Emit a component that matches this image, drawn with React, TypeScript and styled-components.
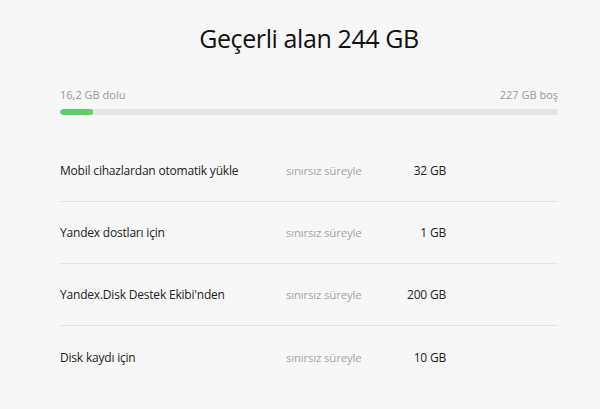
import { createGlobalStyle, styled } from "styled-components";

const GlobalStyle = createGlobalStyle`
  html, body {
    margin: 0;
    padding: 0;
    background: #f7f7f7;
    font-family: "Open Sans", "Liberation Sans", Arial, sans-serif;
    color: #222;
  }
`;

const Page = styled.div`
  padding: 18px 42px 0 60px;
`;

const Title = styled.h1`
  margin: 0;
  text-align: center;
  font-size: 25px;
  font-weight: 400;
  letter-spacing: -0.4px;
  line-height: 40px;
  color: #111;
`;

const Usage = styled.div`
  margin-top: 30px;
`;

const UsageLabels = styled.div`
  display: flex;
  justify-content: space-between;
  font-size: 11px;
  line-height: 14px;
  color: #9a9a9a;
`;

const Bar = styled.div`
  margin-top: 7px;
  height: 6px;
  border-radius: 3px;
  background: #e6e6e6;
  overflow: hidden;
`;

const Fill = styled.div`
  height: 100%;
  border-radius: 3px;
  background: #5fcf6a;
`;

const List = styled.div`
  margin-top: 25px;
`;

const Row = styled.div`
  display: grid;
  grid-template-columns: 226px 100px 60px;
  align-items: center;
  height: 62px;
  font-size: 12px;
  letter-spacing: -0.2px;
  border-bottom: 1px solid #e4e4e4;
  box-sizing: border-box;
  &:last-child {
    border-bottom: none;
  }
`;

const Name = styled.span`
  color: #222;
`;

const Period = styled.span`
  font-size: 11.5px;
  color: #a5a5a5;
`;

const Size = styled.span`
  text-align: right;
  color: #222;
`;

const rows = [
  { name: "Mobil cihazlardan otomatik yükle", size: "32 GB" },
  { name: "Yandex dostları için", size: "1 GB" },
  { name: "Yandex.Disk Destek Ekibi'nden", size: "200 GB" },
  { name: "Disk kaydı için", size: "10 GB" },
];

export default function App() {
  const used = 16.2;
  const total = 244;
  return (
    <>
      <GlobalStyle />
      <Page>
        <Title>Geçerli alan 244 GB</Title>
        <Usage>
          <UsageLabels>
            <span>16,2 GB dolu</span>
            <span>227 GB boş</span>
          </UsageLabels>
          <Bar>
            <Fill style={{ width: `${(used / total) * 100}%` }} />
          </Bar>
        </Usage>
        <List>
          {rows.map((r) => (
            <Row key={r.name}>
              <Name>{r.name}</Name>
              <Period>sınırsız süreyle</Period>
              <Size>{r.size}</Size>
            </Row>
          ))}
        </List>
      </Page>
    </>
  );
}
